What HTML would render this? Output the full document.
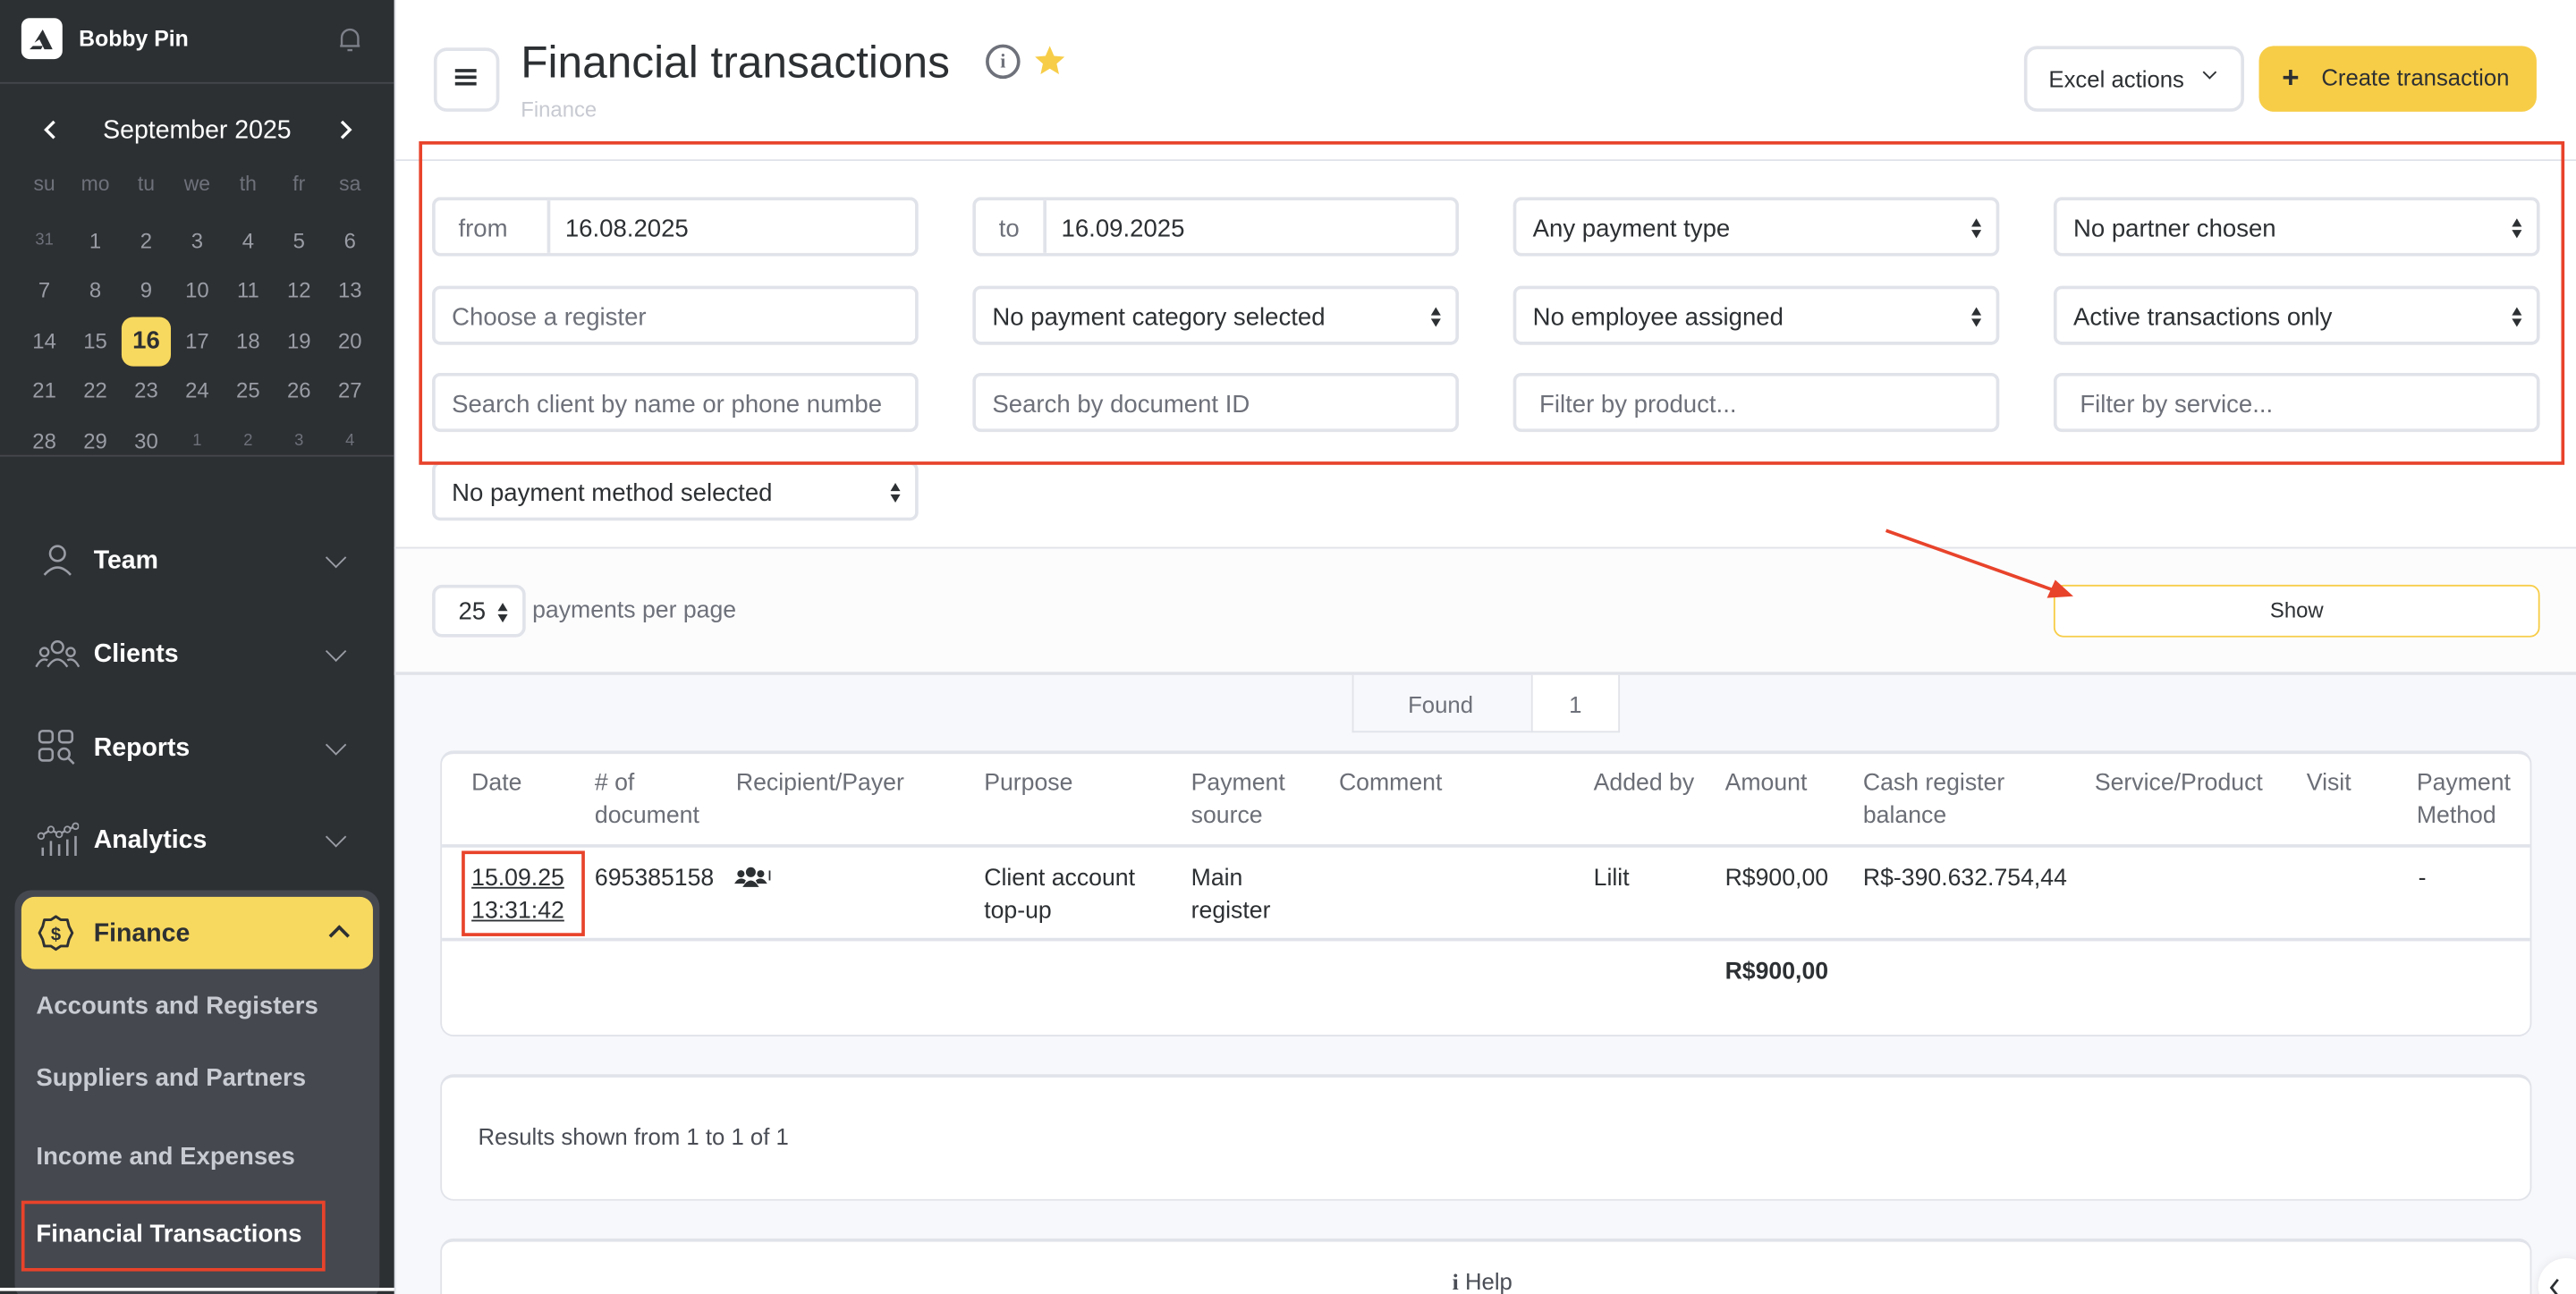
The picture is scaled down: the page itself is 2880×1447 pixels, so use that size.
<!DOCTYPE html>
<html><head><meta charset="utf-8">
<style>
*{box-sizing:border-box;margin:0;padding:0}
html,body{width:2880px;height:1446px;overflow:hidden;background:#f7f8fb;font-family:"Liberation Sans",Arial,sans-serif}
#w{position:absolute;left:0;top:0;width:1568px;height:788px;transform:scale(1.83674);transform-origin:0 0;background:#f7f8fb;overflow:hidden}
.a{position:absolute}
.sb{left:0;top:0;width:240px;height:788px;background:#2d3033}
.cal{color:#9a9da5;font-size:13px;width:24px;text-align:center}
.dn{color:#6e717a;font-size:12.5px;width:30px;text-align:center}
.mi{color:#fff;font-size:15.5px;font-weight:bold;left:57px}
.chev{left:200px;width:9px;height:9px;border-right:1.5px solid #9a9da5;border-bottom:1.5px solid #9a9da5;transform:rotate(45deg)}
.sub{color:#c9cbd2;font-size:15px;font-weight:bold;left:22px}
.inp{position:absolute;height:36px;border:2px solid #e1e3ea;border-radius:5px;background:#fff;font-size:15px;color:#2d3033;padding-left:10px;line-height:35px;white-space:nowrap;overflow:hidden}
.ph{color:#6e717a}
.arr{position:absolute;right:8px;top:11px;width:7px;height:12px}
.arr:before{content:"";position:absolute;left:0;top:0;border-left:3.5px solid transparent;border-right:3.5px solid transparent;border-bottom:5px solid #2d3033}
.arr:after{content:"";position:absolute;left:0;top:7px;border-left:3.5px solid transparent;border-right:3.5px solid transparent;border-top:5px solid #2d3033}
.th{color:#6b6e76;font-size:14.5px;line-height:20px}
.td{color:#2d3033;font-size:14.5px;line-height:20px}
.card{background:#fff;border:1px solid #e1e3ea;border-top:2px solid #e1e3ea;border-radius:8px}
</style></head><body><div id="w">
<div class="a sb"></div>
<div class="a" style="left:13px;top:11px;width:25px;height:25px;background:#fff;border-radius:5px"></div>
<svg class="a" style="left:13px;top:11px" width="25" height="25" viewBox="0 0 25 25"><path d="M8 15 L13 7 L19 19 L14 19 L11 13 Z" fill="#2d3033"/><path d="M5 19 L12 19 L13 17 L7 17 Z" fill="#2d3033"/></svg>
<div class="a" style="left:48px;top:16px;color:#fff;font-size:13.5px;font-weight:bold">Bobby Pin</div>
<svg class="a" style="left:205px;top:16px" width="16" height="17" viewBox="0 0 16 17"><path d="M3 12 V7 a5 5 0 0 1 10 0 V12 H3 Z M2 12 H14 M6.5 14.5 H9.5" fill="none" stroke="#7d8089" stroke-width="1.3"/></svg>
<div class="a" style="left:0;top:50px;width:240px;height:1px;background:#44474d"></div>
<svg class="a" style="left:26px;top:73px" width="10" height="12"><path d="M7 1 L2 6 L7 11" fill="none" stroke="#fff" stroke-width="1.8"/></svg>
<svg class="a" style="left:205px;top:73px" width="10" height="12"><path d="M3 1 L8 6 L3 11" fill="none" stroke="#fff" stroke-width="1.8"/></svg>
<div class="a" style="left:0;top:71px;width:240px;text-align:center;color:#fff;font-size:15.5px">September 2025</div>
<div id="cal"></div>
<div class="a" style="left:0;top:277px;width:240px;height:1px;background:#44474d"></div>
<svg class="a" style="left:24px;top:331px" width="22" height="20" viewBox="0 0 22 20"><circle cx="11" cy="6" r="4.5" fill="none" stroke="#9a9da5" stroke-width="1.4"/><path d="M3 19 Q11 10 19 19" fill="none" stroke="#9a9da5" stroke-width="1.4"/></svg>
<div class="a mi" style="top:333px">Team</div><div class="a chev" style="top:335px"></div>
<svg class="a" style="left:21px;top:389px" width="28" height="20" viewBox="0 0 28 20"><circle cx="14" cy="5" r="3.5" fill="none" stroke="#9a9da5" stroke-width="1.3"/><circle cx="6" cy="8" r="2.5" fill="none" stroke="#9a9da5" stroke-width="1.3"/><circle cx="22" cy="8" r="2.5" fill="none" stroke="#9a9da5" stroke-width="1.3"/><path d="M8 17 Q14 8 20 17 M1 17 Q4 11 8 13 M27 17 Q24 11 20 13" fill="none" stroke="#9a9da5" stroke-width="1.3"/></svg>
<div class="a mi" style="top:390px">Clients</div><div class="a chev" style="top:392px"></div>
<svg class="a" style="left:23px;top:444px" width="24" height="24" viewBox="0 0 24 24"><rect x="1" y="1" width="8" height="7" rx="2" fill="none" stroke="#9a9da5" stroke-width="1.4"/><rect x="13" y="1" width="8" height="7" rx="2" fill="none" stroke="#9a9da5" stroke-width="1.4"/><rect x="1" y="12" width="8" height="7" rx="2" fill="none" stroke="#9a9da5" stroke-width="1.4"/><circle cx="16" cy="15" r="3.3" fill="none" stroke="#9a9da5" stroke-width="1.4"/><path d="M18.5 17.5 L22 21" stroke="#9a9da5" stroke-width="1.4"/></svg>
<div class="a mi" style="top:447px">Reports</div><div class="a chev" style="top:449px"></div>
<svg class="a" style="left:22px;top:500px" width="26" height="22" viewBox="0 0 26 22"><path d="M3 9 L9 5 L14 8 L19 5 L24 3" fill="none" stroke="#9a9da5" stroke-width="1.3"/><circle cx="3" cy="9" r="1.8" fill="#2d3033" stroke="#9a9da5"/><circle cx="9" cy="5" r="1.8" fill="#2d3033" stroke="#9a9da5"/><circle cx="14" cy="8" r="1.8" fill="#2d3033" stroke="#9a9da5"/><circle cx="19" cy="5" r="1.8" fill="#2d3033" stroke="#9a9da5"/><circle cx="24" cy="3" r="1.8" fill="#2d3033" stroke="#9a9da5"/><path d="M4 21V16 M9 21V12 M14 21V14 M19 21V11 M24 21V9" stroke="#9a9da5" stroke-width="1.4"/></svg>
<div class="a mi" style="top:503px">Analytics</div><div class="a chev" style="top:505px"></div>
<div class="a" style="left:9px;top:542px;width:222px;height:250px;background:#45484f;border-radius:10px"></div>
<div class="a" style="left:13px;top:546px;width:214px;height:44px;background:#f8d95f;border-radius:8px"></div>
<svg class="a" style="left:22px;top:556px" width="24" height="24" viewBox="0 0 24 24"><path d="M12 2 L15 4 L19 4 L20 8 L22 12 L20 16 L19 20 L15 20 L12 22 L9 20 L5 20 L4 16 L2 12 L4 8 L5 4 L9 4 Z" fill="none" stroke="#2d3033" stroke-width="1.6" stroke-linejoin="round"/><text x="12" y="16.5" text-anchor="middle" font-size="11" font-weight="bold" fill="#2d3033" font-family="Liberation Sans">$</text></svg>
<div class="a mi" style="top:560px;color:#2d3033">Finance</div>
<div class="a" style="left:202px;top:565px;width:9px;height:9px;border-left:2px solid #2d3033;border-top:2px solid #2d3033;transform:rotate(45deg)"></div>
<div class="a sub" style="top:604px">Accounts and Registers</div>
<div class="a sub" style="top:648px">Suppliers and Partners</div>
<div class="a sub" style="top:696px">Income and Expenses</div>
<div class="a sub" style="top:743px;color:#fff">Financial Transactions</div>
<div class="a" style="left:13px;top:731px;width:185px;height:43px;border:2px solid #e8432b"></div>
<div class="a" style="left:0;top:784px;width:240px;height:2px;background:#fff"></div>

<div class="a" style="left:240px;top:0;width:1328px;height:333px;background:#fff"></div>
<div class="a" style="left:240px;top:97px;width:1328px;height:1px;background:#e1e3ea"></div>
<div class="a" style="left:264px;top:29px;width:40px;height:39px;border:2px solid #e1e3ea;border-radius:8px"></div>
<div class="a" style="left:277px;top:42px;width:13px;height:2px;background:#2d3033;box-shadow:0 4px 0 #2d3033,0 8px 0 #2d3033"></div>
<div class="a" style="left:317px;top:23px;font-size:27px;color:#2d3033">Financial transactions</div>
<div class="a" style="left:317px;top:59px;font-size:13px;color:#c8cad2">Finance</div>
<div class="a" style="left:600px;top:27px;width:21px;height:21px;border:2px solid #6e717a;border-radius:50%;text-align:center;font-size:12px;line-height:17px;color:#6e717a;font-weight:bold;font-family:'Liberation Serif',serif">i</div>
<svg class="a" style="left:629px;top:27px" width="20" height="20" viewBox="0 0 20 20"><path d="M10 1 L12.6 7 L19 7.6 L14.2 11.8 L15.6 18.2 L10 14.8 L4.4 18.2 L5.8 11.8 L1 7.6 L7.4 7 Z" fill="#f7cd48"/></svg>
<div class="a" style="left:1232px;top:28px;width:134px;height:40px;border:2px solid #e1e3ea;border-radius:8px;font-size:14px;color:#2d3033;line-height:36px;padding-left:13px">Excel actions</div>
<div class="a" style="left:1342px;top:41px;width:6px;height:6px;border-right:1.5px solid #2d3033;border-bottom:1.5px solid #2d3033;transform:rotate(45deg)"></div>
<div class="a" style="left:1375px;top:28px;width:169px;height:40px;background:#f7cd48;border-radius:9px;font-size:14px;color:#2d3033;line-height:39px;padding-left:38px">Create transaction</div>
<div class="a" style="left:1389px;top:37px;font-size:18px;font-weight:bold;color:#2d3033">+</div>

<div class="inp" style="left:263px;top:120px;width:296px;padding:0"><span style="display:inline-block;width:70px;border-right:2px solid #e1e3ea;height:32px;padding-left:14px;color:#6e717a">from</span><span style="padding-left:9px">16.08.2025</span></div>
<div class="inp" style="left:592px;top:120px;width:296px;padding:0"><span style="display:inline-block;width:43px;border-right:2px solid #e1e3ea;height:32px;padding-left:14px;color:#6e717a">to</span><span style="padding-left:9px">16.09.2025</span></div>
<div class="inp" style="left:921px;top:120px;width:296px">Any payment type<i class="arr"></i></div>
<div class="inp" style="left:1250px;top:120px;width:296px">No partner chosen<i class="arr"></i></div>
<div class="inp ph" style="left:263px;top:174px;width:296px">Choose a register</div>
<div class="inp" style="left:592px;top:174px;width:296px">No payment category selected<i class="arr"></i></div>
<div class="inp" style="left:921px;top:174px;width:296px">No employee assigned<i class="arr"></i></div>
<div class="inp" style="left:1250px;top:174px;width:296px">Active transactions only<i class="arr"></i></div>
<div class="inp ph" style="left:263px;top:227px;width:296px;padding-right:6px">Search client by name or phone numbe</div>
<div class="inp ph" style="left:592px;top:227px;width:296px">Search by document ID</div>
<div class="inp ph" style="left:921px;top:227px;width:296px;padding-left:14px">Filter by product...</div>
<div class="inp ph" style="left:1250px;top:227px;width:296px;padding-left:14px">Filter by service...</div>
<div class="inp" style="left:263px;top:281px;width:296px">No payment method selected<i class="arr"></i></div>
<div class="a" style="left:255px;top:86px;width:1306px;height:197px;border:2px solid #e8432b"></div>

<div class="a" style="left:240px;top:333px;width:1328px;height:78px;background:#fcfcfd;border-top:1px solid #e1e3ea;border-bottom:2px solid #e1e3ea"></div>
<div class="inp" style="left:263px;top:356px;width:57px;height:32px;line-height:30px;border-radius:6px;padding-left:14px">25<i class="arr" style="top:9px"></i></div>
<div class="a" style="left:324px;top:364px;font-size:14.5px;color:#6e717a">payments per page</div>
<div class="a" style="left:1250px;top:356px;width:296px;height:32px;border:1.5px solid #f7cd48;border-radius:6px;background:#fff;text-align:center;line-height:30px;font-size:13px;color:#2d3033">Show</div>
<svg class="a" style="left:1140px;top:318px" width="130" height="52"><path d="M8 5 L112 42" stroke="#e8432b" stroke-width="2"/><path d="M122 45 L106 46 L111 35 Z" fill="#e8432b"/></svg>

<div class="a" style="left:823px;top:411px;width:163px;height:35px;border:1px solid #e1e3ea;border-top:none;background:#f7f8fb"></div>
<div class="a" style="left:932px;top:411px;width:54px;height:35px;background:#fff;border:1px solid #e1e3ea;border-top:none"></div>
<div class="a" style="left:857px;top:421px;font-size:14px;color:#6e717a">Found</div>
<div class="a" style="left:955px;top:421px;font-size:14px;color:#6e717a">1</div>

<div class="a card" style="left:268px;top:457px;width:1273px;height:174px"></div>
<div class="a" style="left:269px;top:514px;width:1271px;height:2px;background:#e1e3ea"></div>
<div class="a" style="left:269px;top:571px;width:1271px;height:2px;background:#e1e3ea"></div>
<div class="a th" style="left:287px;top:467px">Date</div>
<div class="a th" style="left:362px;top:467px"># of<br>document</div>
<div class="a th" style="left:448px;top:467px">Recipient/Payer</div>
<div class="a th" style="left:599px;top:467px">Purpose</div>
<div class="a th" style="left:725px;top:467px">Payment<br>source</div>
<div class="a th" style="left:815px;top:467px">Comment</div>
<div class="a th" style="left:970px;top:467px">Added by</div>
<div class="a th" style="left:1050px;top:467px">Amount</div>
<div class="a th" style="left:1134px;top:467px">Cash register<br>balance</div>
<div class="a th" style="left:1275px;top:467px">Service/Product</div>
<div class="a th" style="left:1404px;top:467px">Visit</div>
<div class="a th" style="left:1471px;top:467px">Payment<br>Method</div>
<div class="a td" style="left:287px;top:525px;text-decoration:underline">15.09.25<br>13:31:42</div>
<div class="a" style="left:281px;top:518px;width:75px;height:52px;border:2px solid #e8432b"></div>
<div class="a td" style="left:362px;top:525px">695385158</div>
<svg class="a" style="left:447px;top:527px" width="22" height="14" viewBox="0 0 22 14"><circle cx="10" cy="4" r="3" fill="#2d3033"/><circle cx="4" cy="5" r="2.2" fill="#2d3033"/><circle cx="16" cy="5" r="2.2" fill="#2d3033"/><path d="M5 13 Q10 5 15 13 Z M0 11 Q3 6 7 9 L6 11 Z M20 11 Q17 6 13 9 L14 11 Z" fill="#2d3033"/><rect x="21" y="3" width="1" height="6" fill="#2d3033"/></svg>
<div class="a td" style="left:599px;top:525px">Client account<br>top-up</div>
<div class="a td" style="left:725px;top:525px">Main<br>register</div>
<div class="a td" style="left:970px;top:525px">Lilit</div>
<div class="a td" style="left:1050px;top:525px">R$900,00</div>
<div class="a td" style="left:1134px;top:525px">R$-390.632.754,44</div>
<div class="a td" style="left:1472px;top:525px">-</div>
<div class="a td" style="left:1050px;top:582px;font-weight:bold">R$900,00</div>

<div class="a card" style="left:268px;top:654px;width:1273px;height:77px"></div>
<div class="a" style="left:291px;top:684px;font-size:14px;color:#4a4d55">Results shown from 1 to 1 of 1</div>
<div class="a card" style="left:268px;top:754px;width:1273px;height:60px"></div>
<div class="a" style="left:884px;top:772px;font-size:14px;color:#4a4d55"><b style="font-family:'Liberation Serif',serif">i</b> Help</div>
<div class="a" style="left:1545px;top:766px;width:34px;height:34px;border-radius:50%;background:#fff;box-shadow:0 0 6px rgba(0,0,0,.08)"></div>
<svg class="a" style="left:1550px;top:778px" width="10" height="12"><path d="M7 1 L3 6 L7 11" fill="none" stroke="#2d3033" stroke-width="1.5"/></svg>
<div class="a" style="left:240px;top:0;width:1px;height:788px;background:#e1e3ea"></div>
</div>
<script>
var d=["su","mo","tu","we","th","fr","sa"],x=[27,58,89,120,151,182,213],h="";
for(var i=0;i<7;i++)h+='<div class="a dn" style="left:'+(x[i]-15)+'px;top:105px">'+d[i]+'</div>';
var rows=[[31,1,2,3,4,5,6],[7,8,9,10,11,12,13],[14,15,16,17,18,19,20],[21,22,23,24,25,26,27],[28,29,30,1,2,3,4]],ys=[139,169,200,230,261];
for(var r=0;r<5;r++)for(var c=0;c<7;c++){var v=rows[r][c],o=(r==0&&c==0)||(r==4&&c>2),s='left:'+(x[c]-12)+'px;top:'+ys[r]+'px;';
if(v==16&&r==2){h+='<div class="a" style="left:74px;top:193px;width:30px;height:30px;background:#f8d95f;border-radius:7px"></div>';s+='color:#2d3033;font-size:15px;font-weight:bold;top:199px;';}
if(o)s+='font-size:10px;color:#6e717a;top:'+(ys[r]+2)+'px;';
h+='<div class="a cal" style="'+s+'">'+v+'</div>';}
document.getElementById("cal").outerHTML=h;
</script>
</body></html>
